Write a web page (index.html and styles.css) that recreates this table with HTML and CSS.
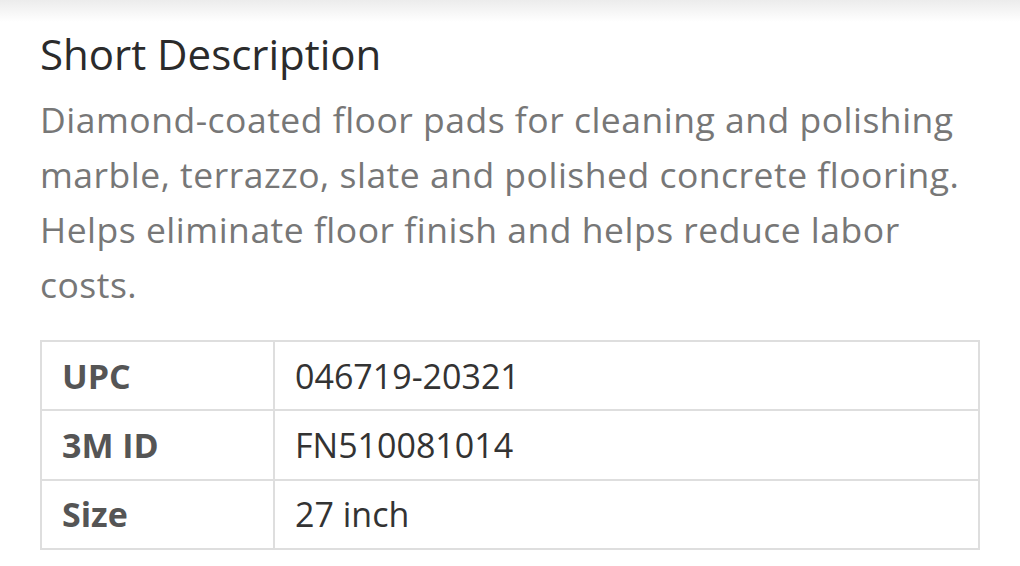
FILE: index.html
```html
<!DOCTYPE html>
<html>
<head>
<meta charset="utf-8">
<link rel="stylesheet" href="styles.css">
</head>
<body>
<div class="topbar"></div>
<section class="content">
  <h2 class="title">Short Description</h2>
  <p class="desc">Diamond-coated floor pads for cleaning and polishing marble, terrazzo, slate and polished concrete flooring. Helps eliminate floor finish and helps reduce labor costs.</p>
  <table class="specs">
    <tr><th>UPC</th><td>046719-20321</td></tr>
    <tr><th>3M ID</th><td>FN510081014</td></tr>
    <tr><th>Size</th><td>27 inch</td></tr>
  </table>
</section>
</body>
</html>
```

FILE: styles.css
```css
html, body {
  margin: 0;
  padding: 0;
  background: #fff;
}
body {
  font-family: "Open Sans", "Liberation Sans", sans-serif;
  width: 1020px;
  height: 566px;
  overflow: hidden;
}
.topbar {
  height: 22px;
  background: linear-gradient(#ececec, #fff);
}
.content {
  padding: 0 40px;
}
.title {
  margin: 4px 0 0;
  font-weight: 400;
  font-size: 42px;
  color: #2b2b2b;
  line-height: 56px;
}
.desc {
  margin: 10px 0 0;
  font-size: 35.5px;
  letter-spacing: 0.5px;
  line-height: 55px;
  color: #777;
}
.specs {
  margin-top: 28px;
  width: 940px;
  border-collapse: collapse;
  font-size: 34px;
}
.specs th, .specs td {
  border: 2px solid #dedede;
  height: 67.4px;
  padding: 0 20px;
  text-align: left;
}
.specs th {
  width: 191px;
  font-weight: 700;
  color: #555;
}
.specs td {
  color: #333;
  font-weight: 400;
}
```
